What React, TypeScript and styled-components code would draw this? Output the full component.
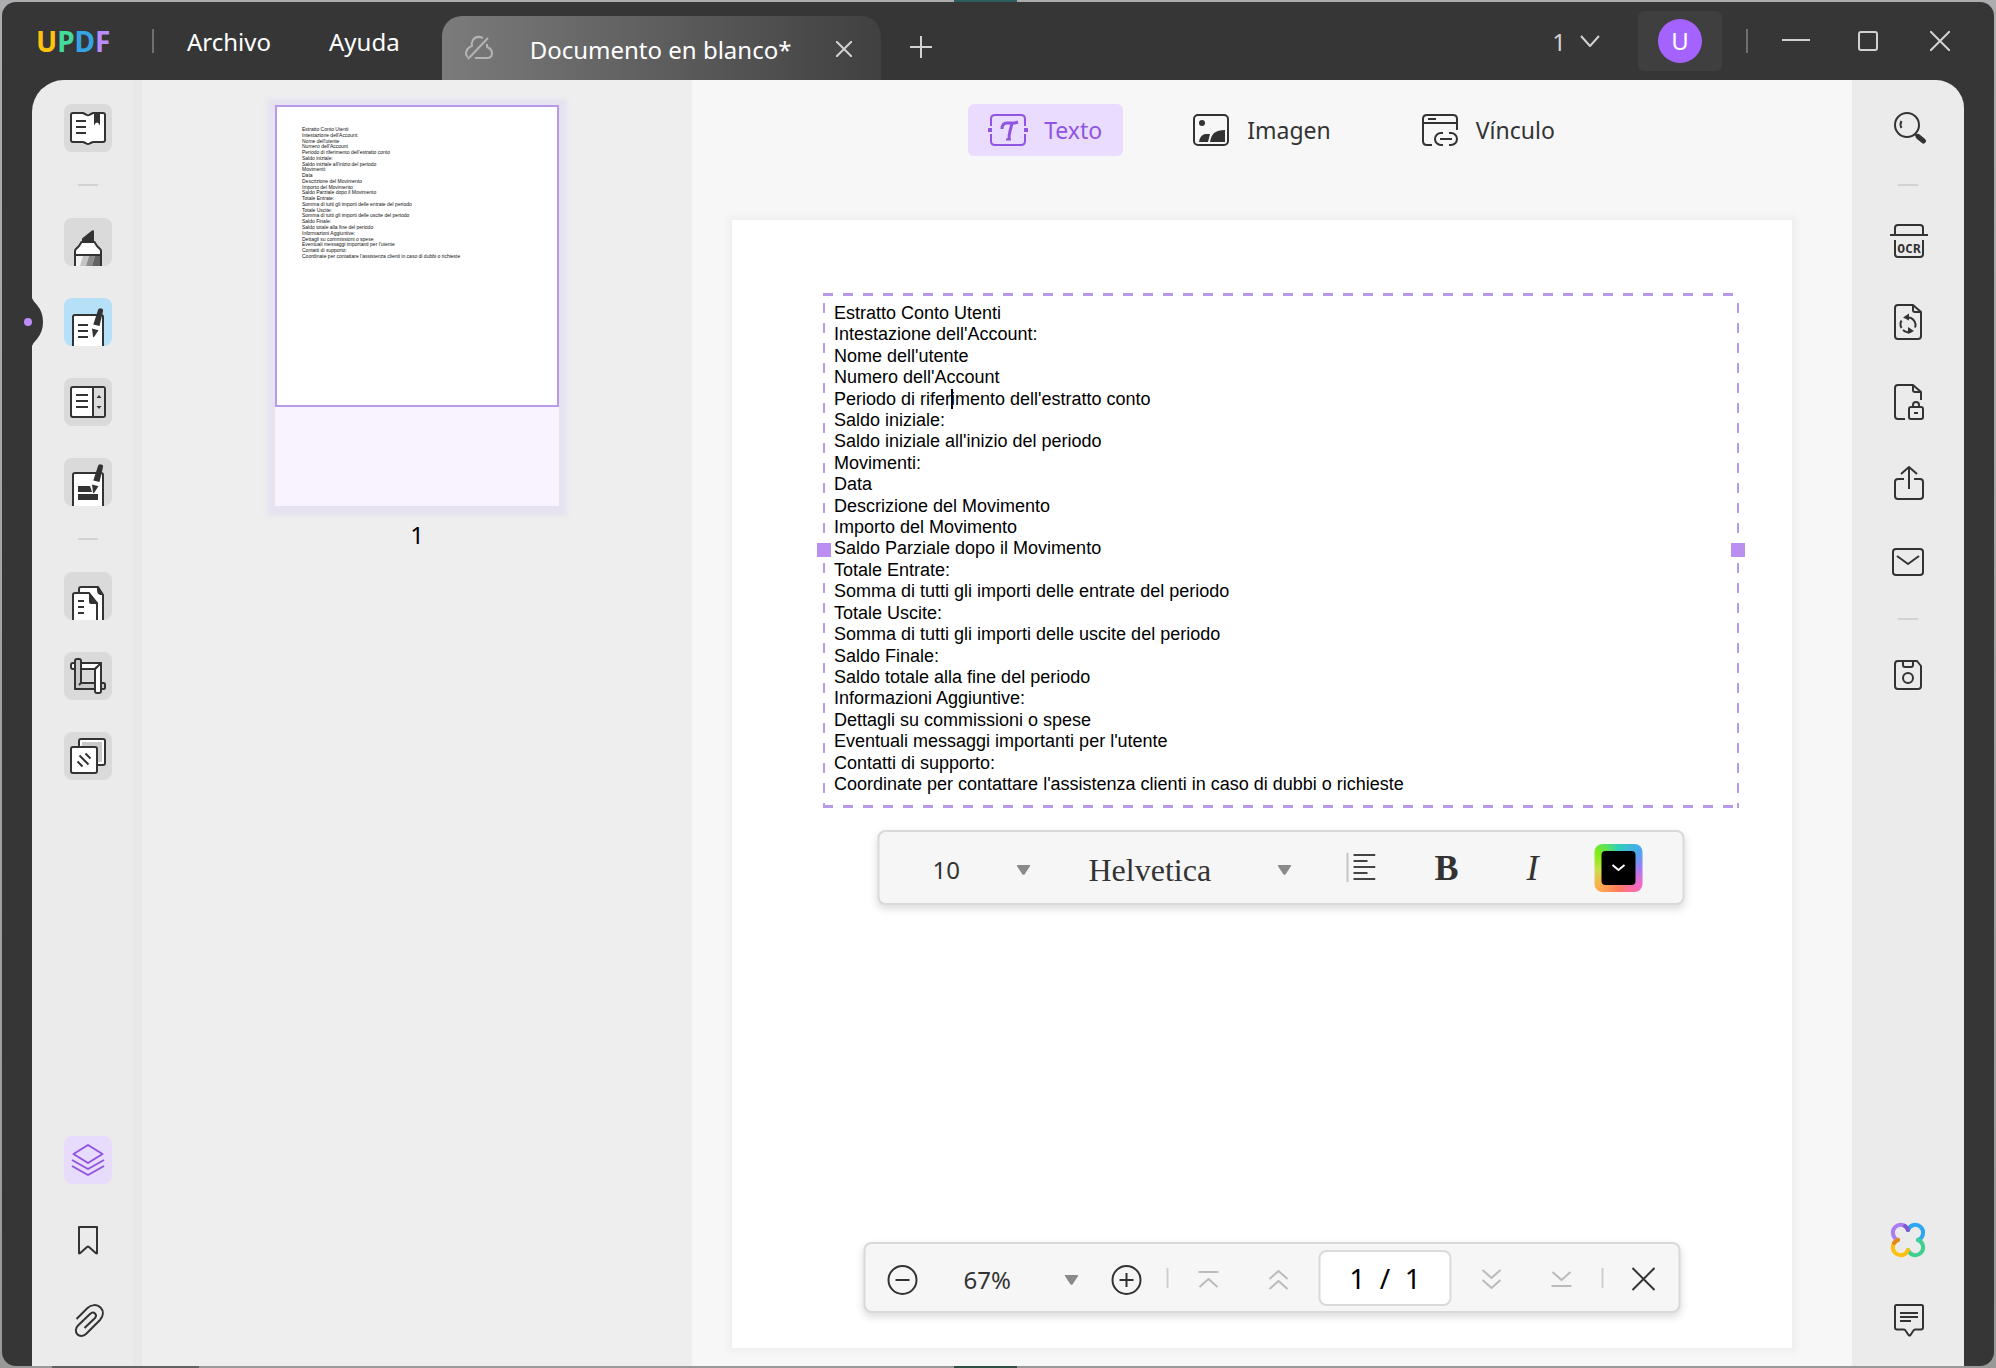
import React from "react";
import styled, { createGlobalStyle, css } from "styled-components";

const ink = "#333333";
const accent = "#9055e0";
const dash = "#b99aea";
const uiFont = '"Noto Sans", "Open Sans", sans-serif';
const docFont = '"Liberation Sans", Arial, sans-serif';
const serifFont = '"Liberation Serif", "Times New Roman", serif';

const GlobalStyle = createGlobalStyle`
  * { box-sizing: border-box; }
  body { margin: 0; font-family: ${uiFont}; font-size: 24px; color: ${ink}; }
  button, input, select { font: inherit; color: inherit; }
  svg { display: block; flex: none; }
`;

const Desktop = styled.div`
  display: flex;
  min-height: 100vh;
  padding: 2px;
  background:
    linear-gradient(90deg, transparent 954px, #2f5e60 954px 1017px, transparent 1017px) top / 100% 2px no-repeat,
    linear-gradient(90deg, transparent 52px, #636161 52px 199px, transparent 199px 954px, #2f4f46 954px 1017px, transparent 1017px) bottom / 100% 2px no-repeat,
    linear-gradient(180deg, #adadb0, #999a98);
`;

const AppWindow = styled.div`
  flex: 1;
  min-width: 0;
  display: flex;
  flex-direction: column;
  border-radius: 14px;
  background: #363636;
`;

const TitleBar = styled.header`
  display: flex;
  align-items: center;
  height: 78px;
  padding: 0 38px 0 34px;
  color: #ffffff;
`;

const Logo = styled.div`
  display: flex;
  width: 76px;
  margin-right: 40px;
  font-weight: 700;
  font-size: 28px;
  line-height: 32px;
`;

const LogoLetter = styled.span<{ $color: string }>`
  color: ${(p) => p.$color};
`;

const Rule = styled.span<{ $height: number; $color: string }>`
  flex: none;
  width: 2px;
  height: ${(p) => p.$height}px;
  background: ${(p) => p.$color};
`;

const MenuBar = styled.nav`
  display: flex;
  gap: 58px;
  margin: 2px 42px 0 33px;
`;

const bare = css`
  display: flex;
  align-items: center;
  justify-content: center;
  border: 0;
  padding: 0;
  background: none;
  cursor: pointer;
`;

const MenuButton = styled.button`
  ${bare}
  line-height: 32px;
`;

const DocTab = styled.div`
  display: flex;
  align-items: center;
  align-self: flex-end;
  width: 439px;
  height: 64px;
  padding: 2px 28px 0 20px;
  border-radius: 20px 20px 0 0;
  background: linear-gradient(90deg, #7b7b7b, #404040);
`;

const TabTitle = styled.span`
  flex: 1;
  padding: 2px 0 0 36px;
  line-height: 32px;
  white-space: nowrap;
`;

const TitleButton = styled.button<{ $size: number }>`
  ${bare}
  width: ${(p) => p.$size}px;
  height: 32px;
  color: #d2d2d2;
`;

const NewTab = styled(TitleButton)`
  margin: 12px 0 0 24px;
`;

const WindowControls = styled.div`
  display: flex;
  align-items: center;
  margin-left: auto;
`;

const TabCount = styled.button`
  ${bare}
  gap: 14px;
  margin-right: 38px;
  color: #d2d2d2;
`;

const Account = styled.button`
  ${bare}
  width: 84px;
  height: 60px;
  margin-right: 24px;
  border-radius: 6px;
  background: #3f3f3f;
  color: #ffffff;
`;

const Avatar = styled.span`
  width: 44px;
  height: 44px;
  border-radius: 50%;
  background: #a463ff;
  line-height: 44px;
`;

const SystemButtons = styled.div`
  display: flex;
  gap: 40px;
  margin-left: 32px;
`;

const Workspace = styled.div`
  flex: 1;
  display: flex;
  margin: 0 30px;
`;

const Rail = styled.aside<{ $side: "left" | "right" }>`
  flex: none;
  display: flex;
  flex-direction: column;
  justify-content: space-between;
  align-items: center;
  width: ${(p) => (p.$side === "left" ? 110 : 112)}px;
  padding: 24px 0 22px;
  background: #ebebeb;
  ${(p) =>
    p.$side === "left"
      ? "padding-right: 21px; padding-left: 32px; border-right: 9px solid #e8e8e8; border-top-left-radius: 32px;"
      : "border-top-right-radius: 28px;"}
`;

const RailGroup = styled.div`
  display: flex;
  flex-direction: column;
  align-items: center;
  gap: 32px;
`;

const RailRule = styled.span`
  width: 20px;
  height: 2px;
  background: #d2d2d2;
`;

const RailButton = styled.button<{ $fill?: string }>`
  ${bare}
  position: relative;
  width: 48px;
  height: 48px;
  border-radius: 8px;
  background: ${(p) => p.$fill ?? "transparent"};
`;

const Notch = styled.svg`
  position: absolute;
  left: -42px;
  top: 0;
`;

const Thumbnails = styled.section`
  flex: none;
  display: flex;
  flex-direction: column;
  align-items: center;
  width: 550px;
  padding-top: 25px;
  background: #eeeeee;
`;

const Thumb = styled.button`
  display: flex;
  flex-direction: column;
  align-items: stretch;
  justify-content: flex-start;
  width: 284px;
  height: 401px;
  padding: 0;
  border: 0;
  background: #f8f3ff;
  box-shadow: 0 2px 5px 8px #e6e2f0;
  text-align: left;
`;

const ThumbView = styled.span`
  display: block;
  height: 302px;
  padding: 20px 0 0 25px;
  border: 2px solid ${dash};
  background: #ffffff;
`;

const ThumbText = styled.span`
  display: flex;
  flex-direction: column;
  justify-content: space-between;
  height: 132px;
  font-family: ${docFont};
  font-size: 5px;
  line-height: 5px;
  color: #111111;
  white-space: nowrap;
`;

const ThumbNumber = styled.span`
  margin-top: 12px;
  line-height: 34px;
  color: #000000;
`;

const Editor = styled.main`
  position: relative;
  flex: 1;
  min-width: 0;
  display: flex;
  flex-direction: column;
  padding: 24px 60px 18px 40px;
  background: #f7f7f7;
`;

const ModeBar = styled.div`
  display: flex;
  justify-content: center;
  gap: 48px;
  margin: 0 -20px 64px 0;
`;

const ModeButton = styled.button<{ $active?: boolean }>`
  ${bare}
  gap: 16px;
  height: 52px;
  padding: 0 21px 0 20px;
  border-radius: 6px;
  background: ${(p) => (p.$active ? "#e9dcfe" : "transparent")};
  font-size: 23px;
  color: ${(p) => (p.$active ? accent : ink)};
`;

const Page = styled.article`
  flex: 1;
  padding: 73px 53px 0 91px;
  background: #ffffff;
  box-shadow: 0 0 6px 4px #efefef;
`;

const line = (dir: string) =>
  `repeating-linear-gradient(${dir}, ${dash} 0 10px, transparent 10px 20px)`;

const TextFrame = styled.div`
  position: relative;
  height: 515px;
  padding: 10px 11px;
  background:
    ${line("90deg")} 0 0 / 100% 3px no-repeat,
    ${line("90deg")} 0 100% / 100% 3px no-repeat,
    ${line("180deg")} 0 10px / 2px 100% no-repeat,
    ${line("180deg")} 100% 10px / 2px 100% no-repeat;
`;

const TextLines = styled.div`
  display: flex;
  flex-direction: column;
  justify-content: space-between;
  height: 491px;
  font-family: ${docFont};
  font-size: 18px;
  line-height: 20px;
  color: #000000;
  white-space: nowrap;
`;

const TextLine = styled.span`
  display: block;
`;

const Caret = styled.span`
  position: absolute;
  width: 2px;
  height: 20px;
  background: #000000;
`;

const Handle = styled.span<{ $side: "left" | "right" }>`
  position: absolute;
  top: 250px;
  ${(p) => p.$side}: -6px;
  width: 14px;
  height: 14px;
  background: #bb8ff2;
`;

const floating = css`
  position: absolute;
  left: 50%;
  transform: translateX(-50%);
  display: flex;
  align-items: center;
  border: 2px solid #d9d9d9;
  border-radius: 8px;
  background: #f6f6f6;
  box-shadow: 0 4px 8px rgba(0, 0, 0, 0.14);
`;

const FormatBar = styled.div`
  ${floating}
  top: 100%;
  margin-top: 22px;
  height: 75px;
  padding: 0 40px 0 53px;
`;

const FormatButtons = styled.div`
  display: flex;
  gap: 38px;
  margin-left: 45px;
`;

const FormatButton = styled.button`
  ${bare}
  width: 48px;
  height: 48px;
  font-family: ${serifFont};
  font-size: 36px;
  line-height: 40px;
`;

const ColorButton = styled.button`
  ${bare}
  width: 48px;
  height: 48px;
  border-radius: 8px;
  background: conic-gradient(#2fd0b8, #4aa8ee 50deg, #a07cf5 90deg, #f568c8 130deg, #ff7a5c 180deg, #ffab50 225deg, #c8e04a 265deg, #80ee14 305deg, #2fd0b8);
`;

const ColorSwatch = styled.span`
  display: flex;
  align-items: center;
  justify-content: center;
  width: 34px;
  height: 34px;
  border-radius: 4px;
  background: #000000;
  color: #ffffff;
`;

const Picker = styled.label<{ $width: number; $gap?: number }>`
  display: grid;
  align-items: center;
  width: ${(p) => p.$width}px;
  margin-left: ${(p) => p.$gap ?? 0}px;
  color: #333333;
  & > * { grid-area: 1 / 1; }
  & > svg { justify-self: end; margin-top: 4px; pointer-events: none; }
`;

const Select = styled.select<{ $serif?: boolean }>`
  appearance: none;
  width: 100%;
  height: 40px;
  margin-top: 4px;
  padding: 0;
  border: 0;
  background: none;
  font-family: ${(p) => (p.$serif ? serifFont : uiFont)};
  font-size: ${(p) => (p.$serif ? 32 : 24)}px;
`;

const PageBar = styled.div`
  ${floating}
  bottom: 53px;
  height: 71px;
  gap: 24px;
  padding: 0 19px 0 21px;
`;

const BarGroup = styled.div<{ $gap: number }>`
  display: flex;
  align-items: center;
  gap: ${(p) => p.$gap}px;
`;

const BarButton = styled.button<{ $muted?: boolean }>`
  ${bare}
  width: 32px;
  height: 32px;
  margin-top: 4px;
  color: ${(p) => (p.$muted ? "#bbbbbb" : ink)};
`;

const PageField = styled.input`
  width: 133px;
  height: 56px;
  padding: 0;
  border: 2px solid #dadada;
  border-radius: 8px;
  background: #ffffff;
  font-size: 28px;
  color: #000000;
  text-align: center;
`;

type IconProps = { w?: number; h?: number; sw?: number; color?: string; children: React.ReactNode };

const Icon = ({ w = 48, h = 48, sw = 2, color = "currentColor", children }: IconProps) => (
  <svg
    width={w}
    height={h}
    viewBox={`0 0 ${w} ${h}`}
    fill="none"
    stroke={color}
    strokeWidth={sw}
    strokeLinejoin="round"
    aria-hidden="true"
  >
    {children}
  </svg>
);

const Arrow = () => (
  <svg width="14" height="10" viewBox="0 0 14 10" aria-hidden="true">
    <path d="M1 0h12q1 0 .6 1L8 9.400q-1 .8-2 0L.4 1Q0 0 1 0z" fill="#8a8a8a" />
  </svg>
);

const Pen = ({ y }: { y: number }) => (
  <g transform={`translate(0 ${y})`} stroke="none">
    <path d="M34 12q.6-2 2.600-1.600l1 .2q2 .6 1.400 2.600L35.500 28l-6.200-1.600z" fill={ink} />
    <path d="M28.500 28l7 1.800" stroke="#fff" strokeWidth="2" />
    <path d="M28 30.500l6.500 1.800-4.300 6.500q-.8.800-1.200-.2z" fill={ink} />
  </g>
);

const BookIcon = () => (
  <Icon color={ink}>
    <path d="M9 9h10l3 1.500q2 1.500 4 0L29 9h10q2 0 2 2v25q0 2-2 2H29l-3 1.200q-2 1.400-4 0L19 38H9q-2 0-2-2V11q0-2 2-2z" fill="#fff" />
    <path d="M12 17h10M12 23h10M12 29h10" />
    <path d="M30 9h6v12.500q-1.500-3-3-3t-3 3z" fill={ink} stroke="none" />
  </Icon>
);

const MarkerIcon = () => (
  <Icon color={ink}>
    <path d="M12 37h24v11H12z" fill="#f1f1f1" stroke="none" />
    <path d="M19 38h6l-3 10h-6z" fill="#c4c4c4" stroke="none" />
    <path d="M25 38h6l-3 10h-6z" fill="#8c8c8c" stroke="none" />
    <path d="M31 38h5v10h-8z" fill="#636363" stroke="none" />
    <path d="M11 37v-4q0-1 1-2l3-3 2.500-4h13l2.500 4 3 3q1 1 1 2v4z" fill="#fff" />
    <path d="M11 36v12M37 36v12" />
    <path d="M18 25v-4.500l10-8q2-1 2 1V25z" fill={ink} stroke="none" />
  </Icon>
);

const EditIcon = () => (
  <Icon color={ink}>
    <path d="M9 49V19q0-2 2-2h26q2 0 2 2v30" fill="#fff" />
    <path d="M14 27h10M14 33h10M14 39h10" />
    <Pen y={0} />
  </Icon>
);

const OrganizeIcon = () => (
  <Icon color={ink}>
    <rect x="7" y="9" width="34" height="30" rx="2" fill="#fff" />
    <path d="M30 10h10v28H30z" fill="#dcdcdc" stroke="none" />
    <path d="M29 9v30M12 17h12M12 23h12M12 29h12" />
    <path d="M32.500 20l2.500-3 2.500 3zM32.500 28l2.500 3 2.500-3z" fill={ink} stroke="none" />
  </Icon>
);

const FormIcon = () => (
  <Icon color={ink}>
    <path d="M9 49V17q0-2 2-2h26q2 0 2 2v32" fill="#fff" />
    <path d="M14 28h12l2 6H14zM14 36h20v6H14z" fill={ink} stroke="none" />
    <Pen y={-4} />
  </Icon>
);

const PagesIcon = () => (
  <Icon color={ink}>
    <path d="M15 49V17q0-2 2-2h17l5 8v26" fill="#fff" />
    <path d="M33 14l7 9h-4q-3-1-3-5z" fill={ink} stroke="none" />
    <path d="M9 49V23q0-2 2-2h14l8 10v18" fill="#fff" />
    <path d="M25 20l9 12h-7q-2 0-2-2z" fill={ink} stroke="none" />
    <path d="M14 29h6M14 35h6M14 41h6" />
  </Icon>
);

const CropIcon = () => (
  <Icon color={ink}>
    <path d="M11 17H9q-2 0-2-2v-2q0-2 2-2h28v6H17z" fill="#fff" />
    <rect x="36" y="31" width="5" height="6" rx="1.500" fill="#ccc" />
    <path d="M11 37V9q0-2 2-2h2q2 0 2 2v22h14v6z" fill="#c9c9c9" />
    <path d="M37 11v28q0 2-2 2h-2q-2 0-2-2V17z" fill="#fff" />
    <path d="M31 17l2-2M17 31l-2 2" />
  </Icon>
);

const WatermarkIcon = () => (
  <Icon color={ink}>
    <rect x="15" y="7" width="26" height="26" rx="2" fill="#fff" />
    <path d="M18 10h20v20H18z" fill="#c9c9c9" stroke="none" />
    <rect x="7" y="15" width="26" height="26" rx="2" fill="#fff" />
    <path d="M13.500 29.500l5 5M15.500 23.500l9 9M21.500 21.500l5 5" />
  </Icon>
);

const LayersIcon = () => (
  <Icon color={accent}>
    <path d="M24 9l14.500 9L24 27 9.500 18zM8 24l16 9 16-9M8 30l16 9 16-9" />
  </Icon>
);

const BookmarkIcon = () => (
  <Icon color={ink}>
    <path d="M15 11h18v26q0 1-1 .3L25 31q-1-.8-2 0l-7 6.300q-1 .7-1-.3z" />
  </Icon>
);

const ClipIcon = () => (
  <Icon color={ink}>
    <path d="M12.500 23L23.500 12C27 8.500 33 8 36.500 11.500S39.500 20 36 24L22 38c-2.500 2.500-6.500 2.500-8.500.5-2.500-2.500-2-6.500.5-9L26 18c2-2 4-1.500 5-.5 1.500 1.500 1 3.500-.5 5L20.500 32" />
  </Icon>
);

const SearchIcon = () => (
  <Icon color={ink}>
    <circle cx="23" cy="21" r="12" />
    <path d="M17.500 17q-2 3.500 0 7M31 30l2 2" />
    <path d="M34 32.500l5.500 4.500" strokeWidth="5" strokeLinecap="round" />
  </Icon>
);

const OcrText = styled.text`
  font-family: "DejaVu Sans Mono", monospace;
  font-size: 13px;
  font-weight: 700;
`;

const OcrIcon = () => (
  <Icon color={ink}>
    <path d="M11 17V10q0-3 3-3h22q3 0 3 3v7M6 17h38M11 22v14q0 3 3 3h22q3 0 3-3V22" />
    <OcrText x="25" y="35" textAnchor="middle" fill={ink} stroke="none">OCR</OcrText>
  </Icon>
);

const ConvertIcon = () => (
  <Icon color={ink}>
    <path d="M29 7H14q-3 0-3 3v28q0 3 3 3h20q3 0 3-3V14zM29 7v5q0 2 2 2h6" />
    <path d="M17.500 30a7.500 7.500 0 0 1 0-7.500M23 19.500a7.500 7.500 0 0 1 8 10M27 33.500a7.500 7.500 0 0 1-8-1.500" />
    <path d="M19 19.500l6-4v7zM30 33l-6-4v7z" fill={ink} stroke="none" />
  </Icon>
);

const ProtectIcon = () => (
  <Icon color={ink}>
    <path d="M21 41h-7q-3 0-3-3V10q0-3 3-3h15l8 7v8M29 7v5q0 2 2 2h6" />
    <rect x="25" y="29" width="14" height="12" rx="2" />
    <path d="M29 29v-2q0-3 3-3t3 3v2M30 35h4" />
  </Icon>
);

const ShareIcon = () => (
  <Icon color={ink}>
    <path d="M20 21h-6q-3 0-3 3v14q0 3 3 3h22q3 0 3-3V24q0-3-3-3h-6M25 31V9M17 16l8-7 8 7" />
  </Icon>
);

const MailIcon = () => (
  <Icon color={ink}>
    <rect x="9" y="11" width="30" height="26" rx="3" />
    <path d="M13 18l11 8 11-8" />
  </Icon>
);

const SaveIcon = () => (
  <Icon color={ink}>
    <path d="M14 9h19l4 5v20q0 3-3 3H14q-3 0-3-3V12q0-3 3-3zM19 9v4q0 2 2 2h6q2 0 2-2V9" />
    <circle cx="24" cy="26" r="5" />
  </Icon>
);

const CloverIcon = () => (
  <Icon sw={4}>
    <g strokeLinecap="round">
      <path d="M14 24a7.800 7.800 0 1 1 10-10" stroke="#ab7df2" />
      <path d="M34 24a7.800 7.800 0 1 0-10-10" stroke="#2ca7f0" />
      <path d="M34 24a7.800 7.800 0 1 1-10 10" stroke="#3fd08f" />
      <path d="M14 24a7.800 7.800 0 1 0 10 10" stroke="#fcc012" />
      <path d="M21 10q2 1.500 3 4" stroke="#8156cf" />
      <path d="M10 27q1.500-2 4-3" stroke="#e08a18" />
    </g>
  </Icon>
);

const CommentIcon = () => (
  <Icon color={ink}>
    <path d="M12.500 9h25q1.500 0 1.500 1.500v21q0 2-2 2h-6q-1 0-1.500 1l-3 4.500q-1 1-2 0l-3-4.500q-.5-1-1.500-1h-7q-2 0-2-2v-21Q11 9 12.500 9zM16 17h18M16 21h18M16 25h11" />
  </Icon>
);

const TextModeIcon = () => (
  <Icon w={40} h={32}>
    <path d="M3 12V5q0-4 4-4h26q4 0 4 4v7M3 20v7q0 4 4 4h26q4 0 4-4v-7" />
    <path d="M0 14h4v4H0zM36 14h4v4h-4z" fill="currentColor" stroke="none" />
    <path d="M14 15q0-6 5-6h8l3-1M24 9q-1 5-2 8-1 4-1 8" strokeWidth="3" />
    <path d="M18 25.500h5" />
  </Icon>
);

const ImageModeIcon = () => (
  <Icon w={40} h={32}>
    <rect x="3" y="1" width="34" height="30" rx="4" />
    <circle cx="11" cy="9" r="3" fill="currentColor" stroke="none" />
    <path d="M8 28q1-7 6-8h5q-1 4-2 8zM19 28q1-6 4-9 4-3 11-3v12z" fill="currentColor" stroke="none" />
  </Icon>
);

const LinkModeIcon = () => (
  <Icon w={40} h={32}>
    <path d="M12 31H7q-4 0-4-4V5q0-4 4-4h26q4 0 4 4v11M3 9h34M8 5h8" />
    <path d="M23 19h-2a6 6 0 0 0 0 12h2M29 19h2a6 6 0 0 1 0 12h-2M20 25h12" />
  </Icon>
);

const lines = [
  "Estratto Conto Utenti",
  "Intestazione dell'Account:",
  "Nome dell'utente",
  "Numero dell'Account",
  "Periodo di riferimento dell'estratto conto",
  "Saldo iniziale:",
  "Saldo iniziale all'inizio del periodo",
  "Movimenti:",
  "Data",
  "Descrizione del Movimento",
  "Importo del Movimento",
  "Saldo Parziale dopo il Movimento",
  "Totale Entrate:",
  "Somma di tutti gli importi delle entrate del periodo",
  "Totale Uscite:",
  "Somma di tutti gli importi delle uscite del periodo",
  "Saldo Finale:",
  "Saldo totale alla fine del periodo",
  "Informazioni Aggiuntive:",
  "Dettagli su commissioni o spese",
  "Eventuali messaggi importanti per l'utente",
  "Contatti di supporto:",
  "Coordinate per contattare l'assistenza clienti in caso di dubbi o richieste",
];

const CARET_LINE = 4;
const CARET_COLUMN = 16;

const plate = "#dadada";

const Header = () => (
  <TitleBar>
    <Logo>
      <LogoLetter $color="#fdc30f">U</LogoLetter>
      <LogoLetter $color="#43dc9a">P</LogoLetter>
      <LogoLetter $color="#35a4e4">D</LogoLetter>
      <LogoLetter $color="#b98cff">F</LogoLetter>
    </Logo>
    <Rule $height={24} $color="#707070" />
    <MenuBar>
      <MenuButton>Archivo</MenuButton>
      <MenuButton>Ayuda</MenuButton>
    </MenuBar>
    <DocTab>
      <Icon w={32} h={32} color="#b4b4b4">
        <path d="M21 5q-7-3-10 2-2 3-1 6-6 2-6 8 0 2 2 3M25 11v3q5 2 5 6 0 5-5 5H13M6 26L26 5" />
      </Icon>
      <TabTitle>Documento en blanco*</TabTitle>
      <TitleButton $size={18} aria-label="Cerrar documento">
        <Icon w={16} h={16}><path d="M0 0l16 16M16 0L0 16" /></Icon>
      </TitleButton>
    </DocTab>
    <NewTab $size={32} aria-label="Nueva pestaña">
      <Icon w={22} h={22}><path d="M11 0v22M0 11h22" /></Icon>
    </NewTab>
    <WindowControls>
      <TabCount>
        1
        <Icon w={20} h={12}><path d="M1 1l9 10 9-10" /></Icon>
      </TabCount>
      <Account aria-label="Cuenta"><Avatar>U</Avatar></Account>
      <Rule $height={24} $color="#707070" />
      <SystemButtons>
        <TitleButton $size={32} aria-label="Minimizar">
          <Icon w={28} h={20}><path d="M0 9h28" /></Icon>
        </TitleButton>
        <TitleButton $size={32} aria-label="Maximizar">
          <Icon w={20} h={20}><rect x="1" y="1" width="18" height="18" rx="2" /></Icon>
        </TitleButton>
        <TitleButton $size={32} aria-label="Cerrar">
          <Icon w={20} h={20}><path d="M0 0l20 20M20 0L0 20" /></Icon>
        </TitleButton>
      </SystemButtons>
    </WindowControls>
  </TitleBar>
);

const LeftRail = () => (
  <Rail $side="left">
    <RailGroup>
      <RailButton $fill={plate} aria-label="Leer"><BookIcon /></RailButton>
      <RailRule />
      <RailButton $fill={plate} aria-label="Comentar"><MarkerIcon /></RailButton>
      <RailButton $fill="#b5e0f7" aria-label="Editar">
        <Notch width="24" height="48" viewBox="0 0 24 48" aria-hidden="true">
          <path d="M10 0q1 3 5 7 6 7 6 17t-6 17q-4 4-5 7z" fill="#363636" />
          <circle cx="6" cy="24" r="4" fill="#bd8cf8" />
        </Notch>
        <EditIcon />
      </RailButton>
      <RailButton $fill={plate} aria-label="Organizar"><OrganizeIcon /></RailButton>
      <RailButton $fill={plate} aria-label="Formulario"><FormIcon /></RailButton>
      <RailRule />
      <RailButton $fill={plate} aria-label="Páginas"><PagesIcon /></RailButton>
      <RailButton $fill={plate} aria-label="Recortar"><CropIcon /></RailButton>
      <RailButton $fill={plate} aria-label="Marca de agua"><WatermarkIcon /></RailButton>
    </RailGroup>
    <RailGroup>
      <RailButton $fill="#e8dcfd" aria-label="Miniaturas"><LayersIcon /></RailButton>
      <RailButton aria-label="Marcadores"><BookmarkIcon /></RailButton>
      <RailButton aria-label="Adjuntos"><ClipIcon /></RailButton>
    </RailGroup>
  </Rail>
);

const RightRail = () => (
  <Rail $side="right">
    <RailGroup>
      <RailButton aria-label="Buscar"><SearchIcon /></RailButton>
      <RailRule />
      <RailButton aria-label="OCR"><OcrIcon /></RailButton>
      <RailButton aria-label="Convertir"><ConvertIcon /></RailButton>
      <RailButton aria-label="Proteger"><ProtectIcon /></RailButton>
      <RailButton aria-label="Compartir"><ShareIcon /></RailButton>
      <RailButton aria-label="Correo"><MailIcon /></RailButton>
      <RailRule />
      <RailButton aria-label="Guardar"><SaveIcon /></RailButton>
    </RailGroup>
    <RailGroup>
      <RailButton aria-label="Asistente"><CloverIcon /></RailButton>
      <RailButton aria-label="Comentarios"><CommentIcon /></RailButton>
    </RailGroup>
  </Rail>
);

const FormatToolbar = () => (
  <FormatBar>
    <Picker $width={98}>
      <Select aria-label="Tamaño" defaultValue="10">
        <option>10</option>
        <option>12</option>
      </Select>
      <Arrow />
    </Picker>
    <Picker $width={203} $gap={58}>
      <Select aria-label="Fuente" $serif defaultValue="Helvetica">
        <option>Helvetica</option>
      </Select>
      <Arrow />
    </Picker>
    <FormatButtons>
      <FormatButton aria-label="Alinear">
        <Icon w={30} h={30} color="#444444">
          <path d="M2 0v29" stroke="#c4c4c4" />
          <path d="M8 2h22M8 8h14M8 14h22M8 20h14M8 26h22" />
        </Icon>
      </FormatButton>
      <FormatButton aria-label="Negrita"><b>B</b></FormatButton>
      <FormatButton aria-label="Cursiva"><i>I</i></FormatButton>
      <ColorButton aria-label="Color">
        <ColorSwatch>
          <Icon w={14} h={8}><path d="M1 1l6 5 6-5" /></Icon>
        </ColorSwatch>
      </ColorButton>
    </FormatButtons>
  </FormatBar>
);

const PageToolbar = () => (
  <PageBar>
    <BarGroup $gap={32}>
      <BarGroup $gap={45}>
        <BarButton aria-label="Alejar">
          <Icon w={32} h={32}><circle cx="16" cy="16" r="14" /><path d="M9 16h14" /></Icon>
        </BarButton>
        <Picker $width={115}>
          <Select aria-label="Zoom" defaultValue="67%">
            <option>67%</option>
            <option>100%</option>
          </Select>
          <Arrow />
        </Picker>
      </BarGroup>
      <BarButton aria-label="Acercar">
        <Icon w={32} h={32}><circle cx="16" cy="16" r="14" /><path d="M9 16h14M16 9v14" /></Icon>
      </BarButton>
    </BarGroup>
    <Rule $height={20} $color="#d0d0d0" />
    <BarGroup $gap={38}>
      <BarButton $muted aria-label="Primera página">
        <Icon w={32} h={32}><path d="M6 8h20M7 23l9-8 9 8" /></Icon>
      </BarButton>
      <BarButton $muted aria-label="Página anterior">
        <Icon w={32} h={32}><path d="M7 15l9-8 9 8M7 25l9-8 9 8" /></Icon>
      </BarButton>
    </BarGroup>
    <PageField aria-label="Página" defaultValue="1  /  1" />
    <BarGroup $gap={38}>
      <BarButton $muted aria-label="Página siguiente">
        <Icon w={32} h={32}><path d="M7 6l9 8 9-8M7 16l9 8 9-8" /></Icon>
      </BarButton>
      <BarButton $muted aria-label="Última página">
        <Icon w={32} h={32}><path d="M7 8l9 8 9-8M6 22h20" /></Icon>
      </BarButton>
    </BarGroup>
    <Rule $height={20} $color="#d0d0d0" />
    <BarButton aria-label="Cerrar barra">
      <Icon w={32} h={32}><path d="M5 4l22 22M27 4L5 26" /></Icon>
    </BarButton>
  </PageBar>
);

export default function App() {
  return (
    <>
      <GlobalStyle />
      <Desktop>
        <AppWindow>
          <Header />
          <Workspace>
            <LeftRail />
            <Thumbnails>
              <Thumb aria-label="Página 1">
                <ThumbView>
                  <ThumbText>
                    {lines.map((text) => (
                      <TextLine key={text}>{text}</TextLine>
                    ))}
                  </ThumbText>
                </ThumbView>
              </Thumb>
              <ThumbNumber>1</ThumbNumber>
            </Thumbnails>
            <Editor>
              <ModeBar>
                <ModeButton $active><TextModeIcon />Texto</ModeButton>
                <ModeButton><ImageModeIcon />Imagen</ModeButton>
                <ModeButton><LinkModeIcon />Vínculo</ModeButton>
              </ModeBar>
              <Page>
                <TextFrame>
                  <TextLines>
                    {lines.map((text, i) =>
                      i === CARET_LINE ? (
                        <TextLine key={text}>
                          {text.slice(0, CARET_COLUMN)}
                          <Caret />
                          {text.slice(CARET_COLUMN)}
                        </TextLine>
                      ) : (
                        <TextLine key={text}>{text}</TextLine>
                      )
                    )}
                  </TextLines>
                  <Handle $side="left" />
                  <Handle $side="right" />
                  <FormatToolbar />
                </TextFrame>
              </Page>
              <PageToolbar />
            </Editor>
            <RightRail />
          </Workspace>
        </AppWindow>
      </Desktop>
    </>
  );
}
